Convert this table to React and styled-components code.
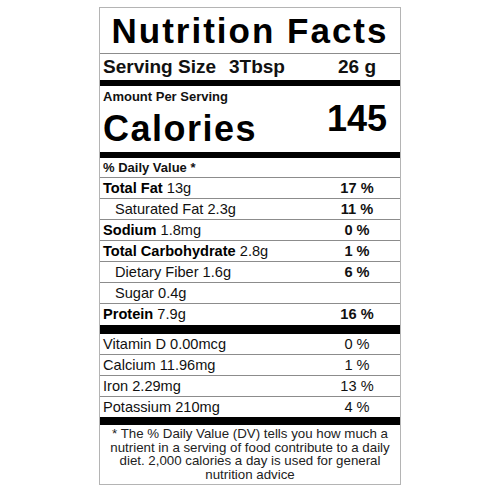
import React from "react";
import styled, { createGlobalStyle } from "styled-components";

const Global = createGlobalStyle`
  html, body { margin: 0; padding: 0; background: #fff; }
  body { font-family: "Liberation Sans", Arial, sans-serif; color: #111; }
`;

const Label = styled.div`
  width: 300px;
  margin: 7px auto 0;
  border: 1px solid #b4b4b4;
  background: #fff;
`;

const Title = styled.div`
  height: 46px;
  display: flex;
  align-items: flex-end;
  justify-content: center;
  padding-bottom: 2px;
  box-sizing: border-box;
  border-bottom: 1px solid #8c8c8c;
  font-weight: bold;
  font-size: 35px;
  line-height: 40px;
  letter-spacing: 2px;
  color: #000;
`;

const Bar = styled.div`
  height: ${(p) => p.$h}px;
  background: #000;
`;

const Row = styled.div`
  display: grid;
  grid-template-columns: 1fr 86px;
  align-items: center;
  height: ${(p) => p.$h || 20}px;
  border-bottom: ${(p) => (p.$noLine ? "none" : "1px solid #8c8c8c")};
  font-size: ${(p) => p.$size || 14.6}px;
  line-height: ${(p) => p.$h || 20}px;
`;

const Name = styled.div`
  padding-left: ${(p) => (p.$indent ? 15 : 3)}px;
  white-space: nowrap;
  font-weight: ${(p) => (p.$bold ? "bold" : "normal")};
`;

const Strong = styled.span`
  font-weight: bold;
  color: #000;
`;

const Pct = styled.div`
  text-align: center;
  white-space: nowrap;
  font-weight: ${(p) => (p.$bold ? "bold" : "normal")};
`;

const Amount = styled.div`
  display: grid;
  grid-template-columns: 1fr 86px;
  height: 66px;
  box-sizing: border-box;
  padding: 3px 0 3px;
`;

const AmountLeft = styled.div`
  display: flex;
  flex-direction: column;
  padding-left: 3px;
`;

const Small = styled.div`
  font-size: 13px;
  line-height: 15px;
  font-weight: bold;
`;

const Calories = styled.div`
  margin-top: 5px;
  font-size: 36px;
  line-height: 40px;
  font-weight: bold;
  letter-spacing: 1.5px;
  color: #000;
`;

const Big = styled.div`
  display: flex;
  align-items: center;
  justify-content: center;
  font-size: 36px;
  font-weight: bold;
  color: #000;
`;

const Foot = styled.div`
  height: 59px;
  box-sizing: border-box;
  padding-top: 2px;
  text-align: center;
  font-size: 13.3px;
  line-height: 13.7px;
  color: #222;
`;

const nutrients = [
  { name: "Total Fat", val: "13g", pct: "17 %", bold: true },
  { name: "Saturated Fat", val: "2.3g", pct: "11 %", indent: true },
  { name: "Sodium", val: "1.8mg", pct: "0 %", bold: true },
  { name: "Total Carbohydrate", val: "2.8g", pct: "1 %", bold: true },
  { name: "Dietary Fiber", val: "1.6g", pct: "6 %", indent: true },
  { name: "Sugar", val: "0.4g", pct: "", indent: true },
  { name: "Protein", val: "7.9g", pct: "16 %", bold: true, last: true },
];

const vitamins = [
  { name: "Vitamin D", val: "0.00mcg", pct: "0 %" },
  { name: "Calcium", val: "11.96mg", pct: "1 %" },
  { name: "Iron", val: "2.29mg", pct: "13 %" },
  { name: "Potassium", val: "210mg", pct: "4 %", last: true },
];

export default function App() {
  return (
    <>
      <Global />
      <Label>
        <Title>Nutrition Facts</Title>
        <Row $h={26} $size={19} $noLine>
          <Name $bold>
            Serving Size<span style={{ marginLeft: 13 }}>3Tbsp</span>
          </Name>
          <Pct $bold>26 g</Pct>
        </Row>
        <Bar $h={6} />
        <Amount>
          <AmountLeft>
            <Small>Amount Per Serving</Small>
            <Calories>Calories</Calories>
          </AmountLeft>
          <Big>145</Big>
        </Amount>
        <Bar $h={6} />
        <Row $h={19} $size={13}>
          <Name $bold>% Daily Value *</Name>
          <Pct />
        </Row>
        {nutrients.map((n) => (
          <Row key={n.name} $h={n.last ? 21 : 20} $noLine={n.last}>
            <Name $indent={n.indent}>
              {n.bold ? <Strong>{n.name}</Strong> : n.name} {n.val}
            </Name>
            <Pct $bold>{n.pct}</Pct>
          </Row>
        ))}
        <Bar $h={9} />
        {vitamins.map((v) => (
          <Row key={v.name} $h={20} $noLine={v.last}>
            <Name>
              {v.name} {v.val}
            </Name>
            <Pct>{v.pct}</Pct>
          </Row>
        ))}
        <Bar $h={8} />
        <Foot>
          * The % Daily Value (DV) tells you how much a
          <br />
          nutrient in a serving of food contribute to a daily
          <br />
          diet. 2,000 calories a day is used for general
          <br />
          nutrition advice
        </Foot>
      </Label>
    </>
  );
}
